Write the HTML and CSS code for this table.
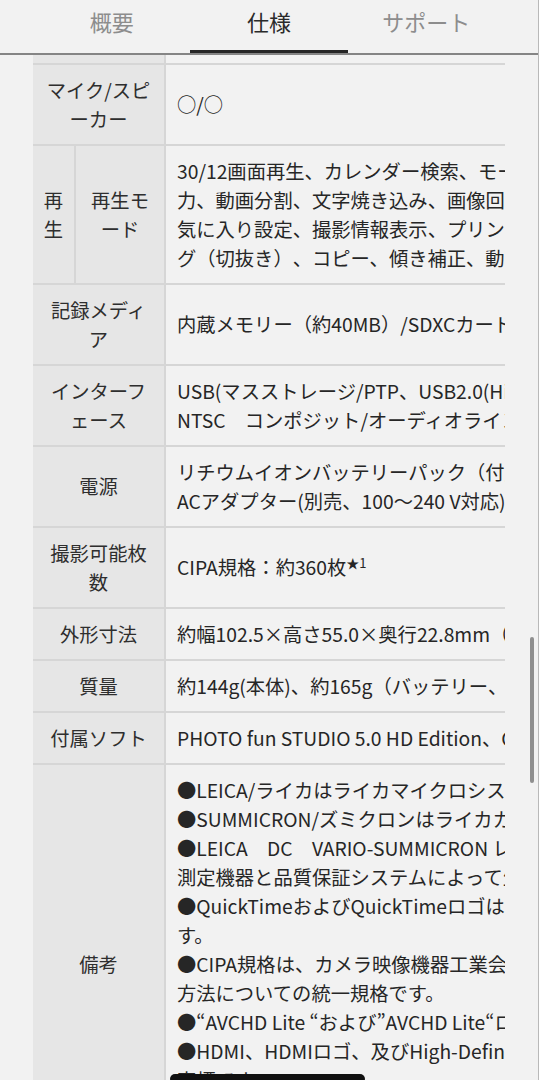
FILE: index.html
```html
<!DOCTYPE html>
<html lang="ja">
<head>
<meta charset="utf-8">
<title>仕様</title>
<link rel="stylesheet" href="styles.css">
</head>
<body>
<nav class="tabs">
  <a class="tab">概要</a>
  <a class="tab active">仕様</a>
  <a class="tab">サポート</a>
</nav>
<main class="spec">
  <table class="spec-table">
    <colgroup><col class="c1"><col class="c2"><col class="c3"></colgroup>
    <tbody>
      <tr><th colspan="2">手ブレ補正</th><td>POWER O.I.S.</td></tr>
      <tr><th colspan="2">マイク/スピーカー</th><td>○/○</td></tr>
      <tr>
        <th class="group">再生</th>
        <th class="sub">再生モード</th>
        <td>30/12画面再生、カレンダー検索、モーション再生、スライドショー、出<br>力、動画分割、文字焼き込み、画像回転、リサイズ、トリミング、お<br>気に入り設定、撮影情報表示、プリント設定、プロテクト、レタッチン<br>グ（切抜き）、コピー、傾き補正、動画静止画切り出し</td>
      </tr>
      <tr><th colspan="2">記録メディア</th><td>内蔵メモリー（約40MB）/SDXCカード/SDHCメモリーカード/SDメモリーカード</td></tr>
      <tr><th colspan="2">インターフェース</th><td>USB(マスストレージ/PTP、USB2.0(Hi-Speed))、<br>NTSC　コンポジット/オーディオライン出力（モノラル）、HDMI</td></tr>
      <tr><th colspan="2">電源</th><td>リチウムイオンバッテリーパック（付属）（3.6 V、895 mAh）<br>ACアダプター(別売、100～240 V対応)</td></tr>
      <tr><th colspan="2">撮影可能枚数</th><td>CIPA規格：約360枚<sup class="note">★1</sup></td></tr>
      <tr><th colspan="2">外形寸法</th><td>約幅102.5×高さ55.0×奥行22.8mm（突起部除く）</td></tr>
      <tr><th colspan="2">質量</th><td>約144g(本体)、約165g（バッテリー、メモリーカード含む）</td></tr>
      <tr><th colspan="2">付属ソフト</th><td>PHOTO fun STUDIO 5.0 HD Edition、QuickTime</td></tr>
      <tr>
        <th colspan="2">備考</th>
        <td>●LEICA/ライカはライカマイクロシステムズ IR GmbH の登録商標です。<br>●SUMMICRON/ズミクロンはライカカメラAGの登録商標です。<br>●LEICA　DC　VARIO-SUMMICRON レンズは、ライカカメラ社の基準に基づき、同社が認定した<br>測定機器と品質保証システムによって生産されています。<br>●QuickTimeおよびQuickTimeロゴは、ライセンスに基づいて使用される商標で<br>す。<br>●CIPA規格は、カメラ映像機器工業会（CIPA）が定めたデジタルカメラの電池寿命の測定<br>方法についての統一規格です。<br>●“AVCHD Lite “および”AVCHD Lite“ロゴはパナソニック株式会社とソニー株式会社の商標です。<br>●HDMI、HDMIロゴ、及びHigh-Definition Multimedia Interfaceは、HDMI Licensing LLCの<br>商標です。<br>●SDXCロゴはSD-3C, LLCの商標です。<br>●その他の会社名、製品名は各社の商標または登録商標です。</td>
      </tr>
    </tbody>
  </table>
</main>
<div class="scrollbar"></div>
<div class="home-indicator"></div>
</body>
</html>
```

FILE: styles.css
```css
html {
  overflow: hidden;
  height: 1080px;
  background: #f2f2f2;
}

body {
  margin: 0;
  width: 538px;
  height: 1080px;
  overflow: hidden;
  border-right: 1px solid #b9b9b9;
  background: #f2f2f2;
  color: #262626;
  font-family: "Noto Sans CJK JP", "Noto Sans", sans-serif;
  text-spacing-trim: space-all;
}

.tabs {
  position: sticky;
  top: 0;
  z-index: 2;
  display: flex;
  height: 53px;
  padding: 0 33px;
  border-bottom: 2px solid #858585;
  background: #f2f2f2;
}

.tab {
  position: relative;
  flex: 1;
  display: flex;
  align-items: center;
  justify-content: center;
  padding-bottom: 11px;
  font-size: 22px;
  color: #8d8d8d;
}

.tab.active {
  color: #2a2a2a;
}

.tab.active::after {
  content: "";
  position: absolute;
  left: 0;
  right: 0;
  bottom: 0;
  height: 3px;
  background: #262626;
}

.spec {
  display: block;
  width: 472px;
  margin: -42px 0 0 33px;
  overflow: hidden;
}

.spec-table {
  width: 860px;
  table-layout: fixed;
  border-collapse: collapse;
  font-size: 19.3px;
  line-height: 29px;
}

.c1 { width: 42px; }
.c2 { width: 90px; }

.spec-table th {
  padding: 10.5px 10px;
  background: #e6e6e6;
  font-weight: normal;
  text-align: center;
  vertical-align: middle;
  color: #2e2e2e;
  border-bottom: 2px solid #d6d6d6;
}

.spec-table th.sub {
  border-left: 2px solid #d6d6d6;
}

.spec-table td {
  padding: 10.5px 11px;
  border-bottom: 2px solid #d6d6d6;
  border-left: 2px solid #d6d6d6;
  white-space: nowrap;
  vertical-align: middle;
  color: #262626;
}

.note {
  font-size: 13px;
  line-height: 0;
  vertical-align: 7px;
}

.scrollbar {
  position: fixed;
  left: 530px;
  top: 637px;
  width: 4px;
  height: 146px;
  border-radius: 2px;
  background: #8f8f8f;
}

.home-indicator {
  position: fixed;
  left: 170px;
  top: 1074px;
  width: 195px;
  height: 10px;
  border-radius: 5px;
  background: #111;
}
```
